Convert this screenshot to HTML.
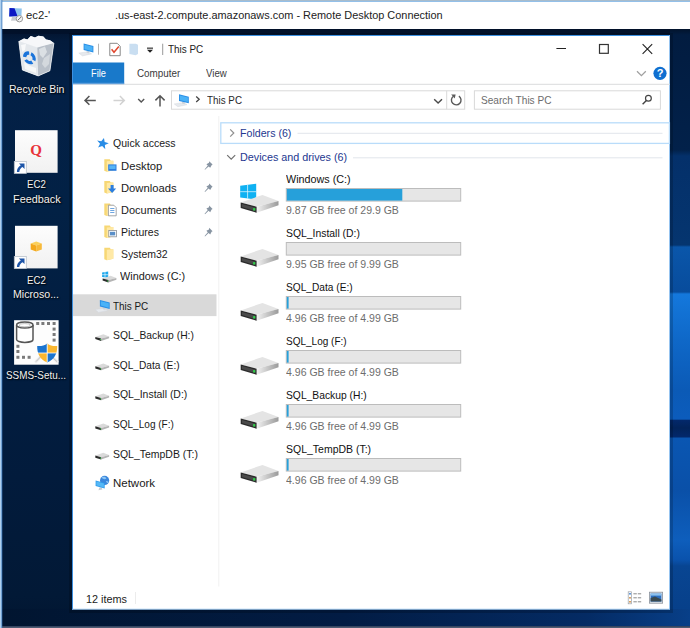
<!DOCTYPE html>
<html><head><meta charset="utf-8"><title>Remote Desktop Connection</title>
<style>
html,body{margin:0;padding:0}
body{width:690px;height:628px;overflow:hidden;background:#04193a}
#root{position:relative;width:690px;height:628px;overflow:hidden;font-family:"Liberation Sans",sans-serif}
#root svg{position:absolute;left:0;top:0}
.t{position:absolute;white-space:nowrap;line-height:1;transform-origin:0 50%}

</style></head>
<body>
<div id="root">
<svg width="690" height="628" viewBox="0 0 690 628">
<defs>
<linearGradient id="gDesk" x1="0" y1="29" x2="0" y2="626" gradientUnits="userSpaceOnUse">
<stop offset="0" stop-color="#02132c"/><stop offset="0.02" stop-color="#031b3c"/><stop offset="0.1" stop-color="#032046"/><stop offset="0.3" stop-color="#022145"/><stop offset="0.5" stop-color="#021e41"/><stop offset="0.75" stop-color="#021b3c"/><stop offset="0.95" stop-color="#021936"/><stop offset="1" stop-color="#011631"/>
</linearGradient>
<linearGradient id="gRight" x1="0" y1="29" x2="0" y2="626" gradientUnits="userSpaceOnUse">
<stop offset="0.0000" stop-color="#02132c"/><stop offset="0.0101" stop-color="#021c40"/><stop offset="0.2027" stop-color="#02214a"/><stop offset="0.2127" stop-color="#04306a"/><stop offset="0.3618" stop-color="#05356f"/><stop offset="0.3652" stop-color="#0a56aa"/><stop offset="0.4405" stop-color="#084c9c"/><stop offset="0.4439" stop-color="#1478dc"/><stop offset="0.5209" stop-color="#0f68c8"/><stop offset="0.6047" stop-color="#0b5ab6"/><stop offset="0.6533" stop-color="#0c5cbc"/><stop offset="0.6558" stop-color="#03286a"/><stop offset="0.6683" stop-color="#02235a"/><stop offset="0.6826" stop-color="#03286a"/><stop offset="0.6859" stop-color="#0a56b2"/><stop offset="0.7722" stop-color="#0a50a8"/><stop offset="0.8559" stop-color="#0e5ebc"/><stop offset="0.8894" stop-color="#0a52ac"/><stop offset="0.8995" stop-color="#084592"/><stop offset="0.9715" stop-color="#07408a"/><stop offset="1.0000" stop-color="#063a80"/>
</linearGradient>
<linearGradient id="gBot" x1="0" y1="0" x2="1" y2="0">
<stop offset="0" stop-color="#011530"/><stop offset="0.5" stop-color="#021c44"/><stop offset="0.85" stop-color="#042b64"/><stop offset="1" stop-color="#083f88"/>
</linearGradient>
<linearGradient id="gDrvSide" x1="0" y1="0" x2="1" y2="0">
<stop offset="0" stop-color="#f2f2f2"/><stop offset="1" stop-color="#9a9a9a"/>
</linearGradient>
<linearGradient id="gIco" x1="0" y1="0" x2="0" y2="1"><stop offset="0" stop-color="#fdfdfd"/><stop offset="1" stop-color="#f1f1f1"/></linearGradient>
<linearGradient id="gBin" x1="0" y1="0" x2="1" y2="0">
<stop offset="0" stop-color="#c9d0d8"/><stop offset="0.5" stop-color="#f4f6f8"/><stop offset="1" stop-color="#b8c0ca"/>
</linearGradient>
<!-- big drive icon, origin = left front top corner at (0,0) -->
<g id="drv">
<polygon points="0,0 21.8,-7.6 37.8,-1.4 15.9,4.2" fill="#e4e4e4"/>
<polygon points="15.9,4.2 37.8,-1.4 37.8,2.8 15.9,10.2" fill="url(#gDrvSide)"/>
<polygon points="0,0 15.9,4.2 15.9,10.2 0,5.4" fill="#2b2b2b"/>
<polygon points="1.2,1.6 14.6,5.2 14.6,8.4 1.2,4.4" fill="#4a4a4a"/>
<rect x="12.4" y="5.6" width="2.2" height="2.4" fill="#2fd048"/>
</g>
<!-- small drive icon (pre-scaled coordinates), origin = left front top corner -->
<g id="sdrv">
<polygon points="0,0 8,-2.8 13.8,-0.5 5.8,1.6" fill="#dadada"/>
<polygon points="5.8,1.6 13.8,-0.5 13.8,1.2 5.8,3.9" fill="#b4b4b4"/>
<polygon points="0,0 5.8,1.6 5.8,3.9 0,2.1" fill="#2b2b2b"/>
<rect x="4.6" y="2" width="1" height="1.1" fill="#2fd048"/>
</g>
<!-- folder small: origin top-left, 9x13 -->
<g id="fold">
<path d="M0,0.5 L5.5,0.5 L6.5,2 L9,2 L9,11.5 L2.5,13 L0,12 Z" fill="#f7d774"/>
<path d="M2.5,2.5 L9,2 L9,11.5 L2.5,13 Z" fill="#ffe9a6"/>
</g>
<!-- pin -->
<g id="pin">
<path d="M5.2,0.6 L8.6,4 L7.6,4.6 L6.2,7.2 L4.6,5.8 L1,9.2 L0.6,8.8 L3.8,5 L2.4,3.6 L5,2.2 Z" fill="#8794a2"/>
</g>
<!-- shortcut overlay 12x12 -->
<g id="lnk">
<rect x="0" y="0" width="12" height="12" fill="#fff" stroke="#b9c2cc" stroke-width="0.8"/>
<path d="M4.6,2 L10.2,2 L10.2,7.6 L8.3,5.7 C6.4,6.6 5.2,8.2 5,10.6 L2.6,10.6 C2.6,7.6 4,5.2 6.5,3.9 Z" fill="#1d55a8"/>
</g>
<!-- This PC small icon: origin at monitor top-left -->
<g id="pc">
<polygon points="-4.8,9.6 4.6,8.2 8,10.4 -1.2,12.4" fill="#e6e9ed"/>
<polygon points="-4.8,9.6 4.6,8.2 8,10.4 -1.2,12.4" fill="none" stroke="#cfd5dc" stroke-width="0.4"/>
<polygon points="3,7 5.6,7.8 5.6,10 3,9.2" fill="#cdd3da"/>
<polygon points="0,0 9.8,2.4 9.8,9 0,6.6" fill="#2a8fe6"/>
<polygon points="0.9,1.2 8.9,3.2 8.9,7.8 0.9,5.6" fill="#4ab2f7"/>
</g>
</defs>

<!-- desktop background -->
<rect x="0" y="29" width="690" height="597" fill="url(#gDesk)"/>
<rect x="0" y="29" width="690" height="5" fill="#020f26" opacity="0.6"/>
<rect x="670" y="29" width="20" height="597" fill="url(#gRight)"/>
<rect x="0" y="609" width="690" height="17" fill="url(#gBot)"/>
<rect x="0" y="626.3" width="690" height="1.7" fill="#4d5b72"/>
<!-- RDP title bar -->
<rect x="0" y="0" width="690" height="29" fill="#fff"/>
<rect x="0" y="0" width="690" height="1.9" fill="#86bbea"/><rect x="0" y="0" width="690" height="1.1" fill="#a8bccc"/>
<rect x="0" y="0" width="2.3" height="628" fill="#3573b8"/><rect x="0" y="0" width="1.5" height="628" fill="#aecfee"/>
<!-- RDP icon -->
<g>
<polygon points="9.5,8 21.8,8.6 21.4,16 9.2,16.6" fill="#8fc4ee"/>
<polygon points="9.5,8 14.5,8.2 17.5,16.2 9.2,16.6" fill="#0c18c4"/>
<polygon points="12,17 18,16.6 19,20.5 11,20.8" fill="#c9ccd2"/>
<circle cx="19.4" cy="18.7" r="3.2" fill="#f4f4f4" stroke="#9a9a9a" stroke-width="1"/>
<path d="M17.8,20.2 L21,17.2" stroke="#777" stroke-width="1"/>
</g>

<!-- Explorer window -->
<rect x="69" y="33" width="604" height="580" fill="#000" opacity="0.18"/>
<rect x="72" y="35" width="598" height="574.5" fill="#fff"/>
<rect x="72" y="35" width="598" height="1" fill="#3d90e0"/>
<rect x="72" y="35" width="1" height="574.5" fill="#3d90e0"/>
<rect x="669.2" y="35" width="0.8" height="574.5" fill="#7db7ee"/>
<rect x="72" y="608.8" width="598" height="0.7" fill="#7db7ee"/>

<!-- title icons -->
<use href="#pc" x="83.6" y="43.5"/>
<rect x="98" y="43.7" width="1" height="11" fill="#b5b5b5"/>
<g>
<path d="M109.8,43.3 L117.2,43.3 L120.2,46.3 L120.2,55.7 L109.8,55.7 Z" fill="#fff" stroke="#7a7a7a" stroke-width="0.9"/>
<path d="M111.6,49.2 L114,52.2 L118.8,46.6" fill="none" stroke="#e0452c" stroke-width="1.5"/>
</g>
<path d="M129.4,43.8 L135.8,43.8 L138,44.8 L138,54 L135.6,55.2 L129.4,54 Z" fill="#c9def1"/>
<rect x="147" y="47.6" width="6" height="1.1" fill="#222"/>
<polygon points="147,49.8 153,49.8 150,52.8" fill="#222"/>
<rect x="162.2" y="43.7" width="1" height="11.3" fill="#9a9a9a"/>
<!-- window controls -->
<rect x="556.4" y="48" width="9.6" height="1" fill="#222"/>
<rect x="599.5" y="44.5" width="8.8" height="8.8" fill="none" stroke="#333" stroke-width="1.2"/>
<path d="M642.6,44.2 L652.2,53.8 M652.2,44.2 L642.6,53.8" stroke="#222" stroke-width="1.1"/>
<!-- ribbon -->
<rect x="73" y="62.5" width="51.2" height="21.3" fill="#1979ca"/>
<rect x="73" y="83.8" width="597" height="1" fill="#dadbdc"/><rect x="73" y="82.8" width="51.2" height="1.4" fill="#5f9fdb"/>
<path d="M637,71.2 L641.4,75.6 L645.8,71.2" fill="none" stroke="#a0a0a0" stroke-width="1.3"/>
<circle cx="660" cy="73.3" r="6.6" fill="#0f6fd0"/>
<text x="660" y="77.4" font-family="Liberation Sans, sans-serif" font-size="11" font-weight="bold" fill="#fff" text-anchor="middle">?</text>
<!-- nav arrows -->
<path d="M95.8,100.4 L85,100.4 M89.4,96 L85,100.4 L89.4,104.8" fill="none" stroke="#555" stroke-width="1.5"/>
<path d="M113.5,100.4 L124.3,100.4 M119.9,96 L124.3,100.4 L119.9,104.8" fill="none" stroke="#d2d2d2" stroke-width="1.5"/>
<path d="M138.2,99 L141.2,102 L144.2,99" fill="none" stroke="#555" stroke-width="1.4"/>
<path d="M160,106.4 L160,95.8 M155.4,100.4 L160,95.8 L164.6,100.4" fill="none" stroke="#555" stroke-width="1.5"/>
<!-- address box -->
<rect x="171.5" y="90.8" width="293.2" height="18.4" fill="#fff" stroke="#d9d9d9" stroke-width="1"/>
<rect x="446.2" y="90.8" width="1" height="18.4" fill="#d9d9d9"/>
<use href="#pc" x="179" y="94.3"/>
<path d="M196.2,96.4 L199.2,99.2 L196.2,102" fill="none" stroke="#444" stroke-width="1.3"/>
<path d="M434.2,99.2 L438.1,103.1 L442,99.2" fill="none" stroke="#4a4a4a" stroke-width="1.4"/>
<path d="M458.9,96.1 A4.8,4.8 0 1 1 453.4,96.2" fill="none" stroke="#5a5a5a" stroke-width="1.4"/>
<polygon points="451.2,94.6 455.6,94.4 454.8,98.6" fill="#5a5a5a"/>
<!-- search box -->
<rect x="474.4" y="90.8" width="186" height="18.4" fill="#fff" stroke="#d9d9d9" stroke-width="1"/>
<circle cx="648.4" cy="98.2" r="2.9" fill="none" stroke="#444" stroke-width="1.2"/>
<path d="M646.4,100.4 L642.6,104.2" stroke="#444" stroke-width="1.4"/>

<!-- nav pane -->
<rect x="73" y="294.3" width="143.5" height="21.8" fill="#d9d9d9"/>
<rect x="218.3" y="116" width="1" height="470.5" fill="#f1f1f1"/>
<polygon points="102.6,137.8 104.3,141.6 108.6,141.8 105.2,144.4 106.6,148.4 102.8,146 99.2,148.4 100.2,144.4 96.6,141.8 100.8,141.6" fill="#2a8de6" transform="rotate(14 102.6 143.4)"/>
<!-- quick access items -->
<use href="#fold" x="104.3" y="158.7"/>
<rect x="108.2" y="164.4" width="8.3" height="6.4" fill="#2b7ee0"/><rect x="109.2" y="165.4" width="6.3" height="3.6" fill="#57b4f5"/>
<use href="#fold" x="104.3" y="180.6"/>
<path d="M110.6,185 L113.6,185 L113.6,188.4 L116.2,188.4 L112.1,193 L108,188.4 L110.6,188.4 Z" fill="#2b7ee0"/>
<use href="#fold" x="104.3" y="203"/>
<path d="M108.4,205.2 L113.8,205.2 L116.2,207.6 L116.2,215.8 L108.4,215.8 Z" fill="#fff" stroke="#8a8f96" stroke-width="0.8"/>
<path d="M110.2,208.5 L114.4,208.5 M110.2,210.5 L114.4,210.5 M110.2,212.5 L114.4,212.5" stroke="#4a8fd8" stroke-width="0.8"/>
<use href="#fold" x="104.3" y="225"/>
<rect x="108.8" y="230.4" width="7.6" height="6.4" fill="#fff" stroke="#8a8f96" stroke-width="0.8"/>
<rect x="110" y="231.8" width="5.2" height="3.6" fill="#5a8fc8"/>
<use href="#fold" x="104.3" y="247.3"/>
<!-- windows c small -->
<g>
<polygon points="102.1,272.4 108.2,271.6 108.2,277.8 102.1,277.1" fill="#1ea7ec"/>
<path d="M105,272 L105,277.5 M102.1,274.7 L108.2,274.7" stroke="#fff" stroke-width="0.6"/>
<use href="#sdrv" x="102.6" y="278.5"/>
</g>
<use href="#pc" x="99.9" y="300"/>
<!-- drives in nav -->
<use href="#sdrv" x="95.3" y="337.0"/>
<use href="#sdrv" x="95.3" y="366.3"/>
<use href="#sdrv" x="95.3" y="396.3"/>
<use href="#sdrv" x="95.3" y="426.3"/>
<use href="#sdrv" x="95.3" y="455.6"/>
<!-- network -->
<g>
<circle cx="104.6" cy="480.4" r="4.6" fill="#3a86dc"/>
<path d="M101.4,477.6 C103,476.4 105.6,476.6 106.4,478.4 C105,479.6 103.4,479.4 101.4,477.6 Z M106,481 C107.4,480.6 108.6,481.4 108.8,482.6 C107.6,483.6 106.4,482.8 106,481 Z" fill="#8cc6f4"/>
<polygon points="99.4,487.6 101.6,487.2 102.4,489.6 98.4,490.2" fill="#c6ccd4"/>
<polygon points="95.6,480.4 104.7,483 104.7,488.6 95.6,486" fill="#2f9cec"/>
<polygon points="96.4,481.4 103.9,483.6 103.9,487.5 96.4,485.3" fill="#55b8f6"/>
</g>
<!-- pins -->
<use href="#pin" x="204" y="160.6"/>
<use href="#pin" x="204" y="182.8"/>
<use href="#pin" x="204" y="205"/>
<use href="#pin" x="204" y="227.2"/>

<!-- content groups -->
<rect x="220.8" y="122.8" width="448.6" height="20.6" fill="#fff" stroke="#b9dcfa" stroke-width="1.3"/>
<path d="M230.2,129.4 L233.8,133 L230.2,136.6" fill="none" stroke="#909090" stroke-width="1.2"/>
<rect x="297.5" y="132.8" width="365" height="1" fill="#e2e5ec"/>
<path d="M227.2,155.2 L231.2,159.2 L235.2,155.2" fill="none" stroke="#707070" stroke-width="1.2"/>
<rect x="353" y="157.3" width="309.5" height="1" fill="#e2e5ec"/>

<!-- drives -->
<g id="tiles">
<g>
<polygon points="240.2,185.8 256.2,183.8 256.2,199.5 240.2,197.5" fill="#0fb1f2"/>
<path d="M247.6,184.9 L247.6,198.5 M240.2,191.7 L256.2,191.7" stroke="#fff" stroke-width="0.8" opacity="0.85"/>
<use href="#drv" x="240.7" y="202.5"/>
</g>
<use href="#drv" x="240.7" y="256.5"/>
<use href="#drv" x="240.7" y="310.5"/>
<use href="#drv" x="240.7" y="364.5"/>
<use href="#drv" x="240.7" y="418.5"/>
<use href="#drv" x="240.7" y="472.5"/>
</g>
<g id="bars" fill="#e6e6e6" stroke="#bcbcbc" stroke-width="1">
<rect x="286.3" y="188.5" width="174.4" height="12.6"/>
<rect x="286.3" y="242.5" width="174.4" height="12.6"/>
<rect x="286.3" y="296.5" width="174.4" height="12.6"/>
<rect x="286.3" y="350.5" width="174.4" height="12.6"/>
<rect x="286.3" y="404.5" width="174.4" height="12.6"/>
<rect x="286.3" y="458.5" width="174.4" height="12.6"/>
</g>
<g fill="#26a0da">
<rect x="286.8" y="189" width="115.5" height="11.6"/>
<rect x="286.8" y="297" width="1.8" height="11.6"/>
<rect x="286.8" y="351" width="1.8" height="11.6"/>
<rect x="286.8" y="405" width="1.8" height="11.6"/>
<rect x="286.8" y="459" width="1.8" height="11.6"/>
</g>

<!-- status bar -->
<rect x="135" y="592" width="1" height="12" fill="#ececec"/>
<g>
<rect x="628.2" y="591.8" width="3.4" height="12" fill="none" stroke="#9aa0a8" stroke-width="0.7"/>
<rect x="629.2" y="593" width="1.6" height="1.6" fill="#3c7fd0"/><rect x="629.2" y="597" width="1.6" height="1.6" fill="#d08a3c"/><rect x="629.2" y="601" width="1.6" height="1.6" fill="#d08a3c"/>
<path d="M633.4,593.8 L641.4,593.8 M633.4,597.8 L641.4,597.8 M633.4,601.8 L641.4,601.8" stroke="#8a8a8a" stroke-width="1" stroke-dasharray="3.4,1"/>
<rect x="649.4" y="592.2" width="13.2" height="11" fill="#dfe6ee" stroke="#8a929c" stroke-width="0.8"/>
<rect x="650.6" y="593.6" width="10.8" height="8" fill="#2d6fc0"/>
<polygon points="650.6,601.6 650.6,598 655,596.4 661.4,599.6 661.4,601.6" fill="#3a4a50"/>
<rect x="650.6" y="593.6" width="10.8" height="2" fill="#8cc2ee"/>
</g>

<!-- desktop icons -->
<!-- recycle bin -->
<g>
<polygon points="18.8,41.2 24,38.6 27.4,39.4 30.8,36 35,37.4 38.4,35.8 43.3,36.6 46,39.4 50,40.2 53.9,43 49.9,70.8 38.2,75.9 22.4,70" fill="#d5dae1"/>
<polygon points="18.8,41.2 37.4,47 38.2,75.9 22.4,70" fill="#e4e8ec"/>
<polygon points="37.4,47 53.9,43 49.9,70.8 38.2,75.9" fill="#b9c0c9"/>
<polygon points="18.8,41.2 24,38.6 27.4,39.4 30.8,36 35,37.4 38.4,35.8 43.3,36.6 46,39.4 50,40.2 53.9,43 37.4,47.6" fill="#f6f7f9"/>
<polygon points="39,49 45,46.4 47,52 43,58 40,55" fill="#e4e7eb" opacity="0.8"/>
<polygon points="44,58 50,54 49,64 45,68 42,64" fill="#d9dde2" opacity="0.8"/>
<polygon points="21,45 26,44 25,50 22.4,52" fill="#fafbfc" opacity="0.9"/>
<polygon points="24,62 30,66 36,68 36,73 25,69" fill="#f8f9fa" opacity="0.9"/>
<path d="M18.8,41.2 L22.4,70 L38.2,75.9 L49.9,70.8 L53.9,43" fill="none" stroke="#f4f6f8" stroke-width="0.8" opacity="0.9"/>
<g transform="translate(29.4,57.8) skewY(12)">
<circle cx="0" cy="0" r="4.7" fill="none" stroke="#1b74da" stroke-width="3.3" stroke-dasharray="7.2 2.64" transform="rotate(-70)"/>
</g>
</g>
<!-- EC2 Feedback -->
<rect x="15" y="130.2" width="42.6" height="42.6" fill="url(#gIco)"/>
<text x="36.2" y="155.4" font-family="Liberation Serif, serif" font-size="15" font-weight="bold" fill="#e8333a" text-anchor="middle">Q</text>
<use href="#lnk" x="14.3" y="161.4"/>
<!-- EC2 Microsoft -->
<rect x="15" y="225.8" width="42.6" height="42.6" fill="url(#gIco)"/>
<g>
<polygon points="36.2,241.4 41.8,243.4 36.2,245.4 30.7,243.4" fill="#fbd05a"/>
<polygon points="30.7,243.4 36.2,245.4 36.2,251.6 30.7,249.4" fill="#f3a81c"/>
<polygon points="41.8,243.4 36.2,245.4 36.2,251.6 41.8,249.4" fill="#f7b93a"/>
</g>
<use href="#lnk" x="14.3" y="256.5"/>
<!-- SSMS -->
<rect x="14.1" y="320.2" width="44.5" height="44.5" fill="#fdfdfd"/>
<g>
<path d="M16.6,325 L16.6,339.4 A8.2,3 0 0 0 33,339.4 L33,325" fill="#fff" stroke="#555" stroke-width="1.5"/>
<ellipse cx="24.8" cy="325" rx="8.2" ry="3" fill="#fff" stroke="#555" stroke-width="1.5"/>
<ellipse cx="24.8" cy="325.2" rx="5.6" ry="1.6" fill="none" stroke="#999" stroke-width="0.6"/>
<g fill="#7a7a7a">
<rect x="36.2" y="322" width="3" height="3"/><rect x="41.4" y="322" width="3" height="3"/><rect x="47" y="322" width="3" height="3"/><rect x="52.6" y="322" width="3" height="3"/>
<rect x="52.6" y="327.6" width="3" height="3"/><rect x="52.6" y="333" width="3" height="3"/><rect x="52.6" y="338.6" width="3" height="3"/>
<rect x="16.4" y="344.8" width="3" height="3"/><rect x="16.4" y="350" width="3" height="3"/>
<rect x="16.4" y="355.8" width="3" height="3"/><rect x="22" y="355.8" width="3" height="3"/><rect x="27.6" y="355.8" width="3" height="3"/>
</g>
<path d="M36,361.6 L40.6,356.8 M57,361.6 L52,356.8" stroke="#efefef" stroke-width="3" stroke-linecap="round"/>
<path d="M36,361.6 L40.6,356.8 M57,361.6 L52,356.8" stroke="#999" stroke-width="0.6" fill="none"/>
<clipPath id="shc"><path d="M47.2,343.4 C50,345.6 53.6,346.4 57.2,346 C57.4,353.6 54.4,359.4 47.2,362.4 C40,359.4 37,353.6 37.2,346 C40.8,346.4 44.4,345.6 47.2,343.4 Z"/></clipPath>
<g clip-path="url(#shc)">
<rect x="36" y="342" width="11.2" height="11" fill="#1b74cf"/>
<rect x="47.2" y="342" width="11" height="11" fill="#f9b630"/>
<rect x="36" y="353" width="11.2" height="11" fill="#f9b630"/>
<rect x="47.2" y="353" width="11" height="11" fill="#1b74cf"/>
<path d="M47.2,342 L47.2,364 M36,353 L58,353" stroke="#fff" stroke-width="0.8"/>
</g>
</g>
</svg>

<span id="t0" class="t" style="left:26.2px;top:10.0px;font-size:11.5px;color:#222;transform:scaleX(0.9846);">ec2-'</span>
<span id="t1" class="t" style="left:114.5px;top:10.0px;font-size:11.5px;color:#222;transform:scaleX(0.9491);">.us-east-2.compute.amazonaws.com - Remote Desktop Connection</span>
<span id="t2" class="t" style="left:8.6px;top:84.0px;font-size:11.5px;color:#f2f2f2;transform:scaleX(0.9124);text-shadow:1px 1px 1.5px rgba(0,0,0,.9),0 0 2px rgba(0,0,0,.7);">Recycle Bin</span>
<span id="t3" class="t" style="left:26.8px;top:179.0px;font-size:11.5px;color:#f2f2f2;transform:scaleX(0.8402);text-shadow:1px 1px 1.5px rgba(0,0,0,.9),0 0 2px rgba(0,0,0,.7);">EC2</span>
<span id="t4" class="t" style="left:12.6px;top:194.0px;font-size:11.5px;color:#f2f2f2;transform:scaleX(0.9443);text-shadow:1px 1px 1.5px rgba(0,0,0,.9),0 0 2px rgba(0,0,0,.7);">Feedback</span>
<span id="t5" class="t" style="left:26.8px;top:275.0px;font-size:11.5px;color:#f2f2f2;transform:scaleX(0.8402);text-shadow:1px 1px 1.5px rgba(0,0,0,.9),0 0 2px rgba(0,0,0,.7);">EC2</span>
<span id="t6" class="t" style="left:13.1px;top:289.0px;font-size:11.5px;color:#f2f2f2;transform:scaleX(0.9229);text-shadow:1px 1px 1.5px rgba(0,0,0,.9),0 0 2px rgba(0,0,0,.7);">Microso...</span>
<span id="t7" class="t" style="left:6.0px;top:370.0px;font-size:11.5px;color:#f2f2f2;transform:scaleX(0.8612);text-shadow:1px 1px 1.5px rgba(0,0,0,.9),0 0 2px rgba(0,0,0,.7);">SSMS-Setu...</span>
<span id="t8" class="t" style="left:167.9px;top:44.0px;font-size:11.5px;color:#222;transform:scaleX(0.8629);">This PC</span>
<span id="t9" class="t" style="left:90.8px;top:69.0px;font-size:10px;color:#fff;transform:scaleX(0.9240);">File</span>
<span id="t10" class="t" style="left:136.8px;top:69.0px;font-size:10px;color:#3a3a3a;transform:scaleX(0.9862);">Computer</span>
<span id="t11" class="t" style="left:205.8px;top:69.0px;font-size:10px;color:#3a3a3a;transform:scaleX(0.9628);">View</span>
<span id="t12" class="t" style="left:207.1px;top:95.0px;font-size:11.5px;color:#2a2a2a;transform:scaleX(0.8556);">This PC</span>
<span id="t13" class="t" style="left:480.9px;top:95.0px;font-size:11.5px;color:#6d6d6d;transform:scaleX(0.8777);">Search This PC</span>
<span id="t14" class="t" style="left:112.8px;top:138.0px;font-size:11.5px;color:#1a1a1a;transform:scaleX(0.9153);">Quick access</span>
<span id="t15" class="t" style="left:120.8px;top:161.0px;font-size:11.5px;color:#1a1a1a;transform:scaleX(0.9790);">Desktop</span>
<span id="t16" class="t" style="left:120.8px;top:183.0px;font-size:11.5px;color:#1a1a1a;transform:scaleX(0.9770);">Downloads</span>
<span id="t17" class="t" style="left:120.8px;top:205.0px;font-size:11.5px;color:#1a1a1a;transform:scaleX(0.9558);">Documents</span>
<span id="t18" class="t" style="left:120.8px;top:227.0px;font-size:11.5px;color:#1a1a1a;transform:scaleX(0.9122);">Pictures</span>
<span id="t19" class="t" style="left:120.5px;top:249.0px;font-size:11.5px;color:#1a1a1a;transform:scaleX(0.9132);">System32</span>
<span id="t20" class="t" style="left:120.2px;top:271.0px;font-size:11.5px;color:#1a1a1a;transform:scaleX(0.9447);">Windows (C:)</span>
<span id="t21" class="t" style="left:112.8px;top:301.0px;font-size:11.5px;color:#1a1a1a;transform:scaleX(0.8629);">This PC</span>
<span id="t22" class="t" style="left:112.8px;top:330.0px;font-size:11.5px;color:#1a1a1a;transform:scaleX(0.8976);">SQL_Backup (H:)</span>
<span id="t23" class="t" style="left:112.8px;top:360.0px;font-size:11.5px;color:#1a1a1a;transform:scaleX(0.8830);">SQL_Data (E:)</span>
<span id="t24" class="t" style="left:112.8px;top:389.0px;font-size:11.5px;color:#1a1a1a;transform:scaleX(0.9082);">SQL_Install (D:)</span>
<span id="t25" class="t" style="left:112.8px;top:419.0px;font-size:11.5px;color:#1a1a1a;transform:scaleX(0.8741);">SQL_Log (F:)</span>
<span id="t26" class="t" style="left:112.8px;top:449.0px;font-size:11.5px;color:#1a1a1a;transform:scaleX(0.9098);">SQL_TempDB (T:)</span>
<span id="t27" class="t" style="left:113.3px;top:478.0px;font-size:11.5px;color:#1a1a1a;transform:scaleX(0.9979);">Network</span>
<span id="t28" class="t" style="left:240.1px;top:128.0px;font-size:11.5px;color:#233790;transform:scaleX(0.9243);">Folders (6)</span>
<span id="t29" class="t" style="left:240.1px;top:152.0px;font-size:11.5px;color:#233790;transform:scaleX(0.9361);">Devices and drives (6)</span>
<span id="t30" class="t" style="left:286.2px;top:174.0px;font-size:11.5px;color:#111;transform:scaleX(0.9375);">Windows (C:)</span>
<span id="t31" class="t" style="left:286.2px;top:205.0px;font-size:11.5px;color:#6d6d6d;transform:scaleX(0.9150);">9.87 GB free of 29.9 GB</span>
<span id="t32" class="t" style="left:286.2px;top:228.0px;font-size:11.5px;color:#111;transform:scaleX(0.9033);">SQL_Install (D:)</span>
<span id="t33" class="t" style="left:286.2px;top:259.0px;font-size:11.5px;color:#6d6d6d;transform:scaleX(0.9150);">9.95 GB free of 9.99 GB</span>
<span id="t34" class="t" style="left:286.2px;top:282.0px;font-size:11.5px;color:#111;transform:scaleX(0.8844);">SQL_Data (E:)</span>
<span id="t35" class="t" style="left:286.2px;top:313.0px;font-size:11.5px;color:#6d6d6d;transform:scaleX(0.9150);">4.96 GB free of 4.99 GB</span>
<span id="t36" class="t" style="left:286.2px;top:336.0px;font-size:11.5px;color:#111;transform:scaleX(0.8712);">SQL_Log (F:)</span>
<span id="t37" class="t" style="left:286.2px;top:367.0px;font-size:11.5px;color:#6d6d6d;transform:scaleX(0.9150);">4.96 GB free of 4.99 GB</span>
<span id="t38" class="t" style="left:286.2px;top:390.0px;font-size:11.5px;color:#111;transform:scaleX(0.8954);">SQL_Backup (H:)</span>
<span id="t39" class="t" style="left:286.2px;top:421.0px;font-size:11.5px;color:#6d6d6d;transform:scaleX(0.9150);">4.96 GB free of 4.99 GB</span>
<span id="t40" class="t" style="left:286.2px;top:444.0px;font-size:11.5px;color:#111;transform:scaleX(0.9120);">SQL_TempDB (T:)</span>
<span id="t41" class="t" style="left:286.2px;top:475.0px;font-size:11.5px;color:#6d6d6d;transform:scaleX(0.9150);">4.96 GB free of 4.99 GB</span>
<span id="t42" class="t" style="left:86.1px;top:594.0px;font-size:11.5px;color:#222;transform:scaleX(0.9432);">12 items</span>
</div>
</body></html>
